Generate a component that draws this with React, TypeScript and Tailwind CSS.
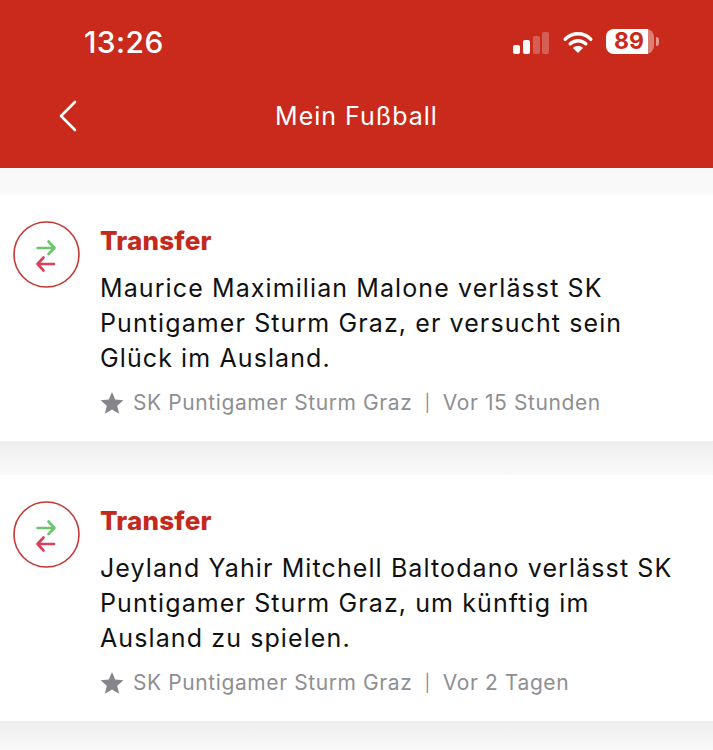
import React from 'react';

const font = { fontFamily: 'Inter, "Liberation Sans", sans-serif' };

function StatusBar() {
  return (
    <div className="flex h-[84px] items-start">
      <span className="ml-[84px] mt-[24px] text-[30px] leading-[36px] font-medium tracking-[0.4px] text-white">
        13:26
      </span>
      <div className="ml-auto mr-[54px] mt-[29px] flex items-center">
        <svg width="38" height="22" viewBox="0 0 38 22" className="mr-[12px] mt-[2px]">
          <rect x="1" y="13" width="7" height="9" rx="2" fill="#fff" />
          <rect x="11" y="8" width="7" height="14" rx="2" fill="#fff" />
          <rect x="21" y="4" width="7" height="18" rx="2" fill="#fff" fillOpacity="0.25" />
          <rect x="30" y="0" width="7" height="22" rx="2" fill="#fff" fillOpacity="0.25" />
        </svg>
        <svg width="32" height="22" viewBox="0 0 32 24" className="mr-[12px]">
          <path d="M2 9 C10 1 22 1 30 9" fill="none" stroke="#fff" strokeWidth="3.6" strokeLinecap="round" />
          <path d="M7.5 14 C12.5 9.5 19.5 9.5 24.5 14" fill="none" stroke="#fff" strokeWidth="3.6" strokeLinecap="round" />
          <path d="M16 24 L10.5 18.5 C13.5 15.8 18.5 15.8 21.5 18.5 Z" fill="#fff" />
        </svg>
        <div className="flex h-[25px] w-[48px] rounded-[8px] bg-white/40">
          <div className="h-[25px] w-[42px] rounded-l-[8px] bg-white pl-[8px] text-[23px] leading-[25px] font-bold whitespace-nowrap text-[#c92a1c]">
            89
          </div>
        </div>
        <div className="ml-[2px] h-[9px] w-[3px] rounded-r-full bg-white/50" />
      </div>
    </div>
  );
}

function TransferIcon() {
  return (
    <svg width="68" height="68" viewBox="0 0 68 68" className="shrink-0">
      <circle cx="33.5" cy="33.5" r="32.5" fill="none" stroke="#bf3a33" strokeWidth="1.6" />
      <path d="M24.5 27 H41 M35.5 20.5 L41.5 27 L35.5 33" fill="none" stroke="#6cc46c" strokeWidth="2.6" strokeLinecap="round" strokeLinejoin="round" />
      <path d="M41 43 H24.5 M30.5 36.5 L24.5 43 L30.5 49.5" fill="none" stroke="#d8405c" strokeWidth="2.6" strokeLinecap="round" strokeLinejoin="round" />
    </svg>
  );
}

function Star() {
  return (
    <svg width="24" height="24" viewBox="0 0 24 24" className="mr-[9px] shrink-0">
      <path d="M12 1 L15.2 8.6 L23.4 9.3 L17.2 14.7 L19.1 22.8 L12 18.5 L4.9 22.8 L6.8 14.7 L.6 9.3 L8.8 8.6 Z" fill="#85858b" />
    </svg>
  );
}

function NewsCard({ lines, time, height }: { lines: string[]; time: string; height: string }) {
  return (
    <div className={`flex bg-white pl-[13px] pt-[26px] ${height}`}>
      <TransferIcon />
      <div className="ml-[19px]">
        <div className="text-[26px] leading-[40px] font-extrabold tracking-[0.2px] text-[#c22a20]">Transfer</div>
        <div className="mt-[10px] text-[25px] leading-[35px] tracking-[1.1px] text-[#111]">
          {lines.map((line) => (
            <div key={line} className="whitespace-nowrap">{line}</div>
          ))}
        </div>
        <div className="mt-[12px] flex items-center text-[21px] leading-[30px] tracking-[0.6px] text-[#8e8e93]">
          <Star />
          <span className="whitespace-nowrap">SK Puntigamer Sturm Graz</span>
          <span className="mx-[12px] text-[17px]">|</span>
          <span className="whitespace-nowrap">{time}</span>
        </div>
      </div>
    </div>
  );
}

export default function App() {
  return (
    <div className="h-[750px] w-[713px] overflow-hidden bg-[#f9f9f9]" style={font}>
      <div className="h-[168px] bg-[#c92a1c]">
        <StatusBar />
        <div className="relative flex h-[64px] items-center justify-center">
          <svg width="20" height="32" viewBox="0 0 20 32" className="absolute left-[58px] top-[16px]">
            <path d="M17 2 L3 16 L17 30" fill="none" stroke="#fff" strokeWidth="2.6" strokeLinecap="round" strokeLinejoin="round" />
          </svg>
          <span className="text-[25px] leading-[36px] font-normal tracking-[1px] text-white">Mein Fußball</span>
        </div>
      </div>
      <div className="h-[27px]" />
      <NewsCard
        height="h-[246px]"
        lines={[
          'Maurice Maximilian Malone verlässt SK',
          'Puntigamer Sturm Graz, er versucht sein',
          'Glück im Ausland.',
        ]}
        time="Vor 15 Stunden"
      />
      <div className="h-[34px] bg-gradient-to-b from-[#eeeeee] to-[#f9f9f9]" />
      <NewsCard
        height="h-[246px]"
        lines={[
          'Jeyland Yahir Mitchell Baltodano verlässt SK',
          'Puntigamer Sturm Graz, um künftig im',
          'Ausland zu spielen.',
        ]}
        time="Vor 2 Tagen"
      />
      <div className="h-[29px] bg-gradient-to-b from-[#eeeeee] to-[#f9f9f9]" />
    </div>
  );
}
